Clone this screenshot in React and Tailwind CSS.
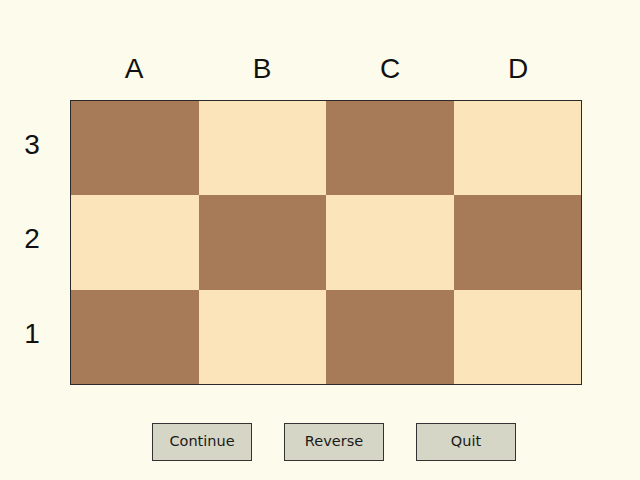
export default function App() {
  const cols = ["A", "B", "C", "D"];
  const rows = [3, 2, 1];
  const dark = "bg-[#a87b58]";
  const light = "bg-[#fce4ba]";
  return (
    <div className="w-[640px] h-[480px] bg-[#fdfcec] text-[#111] overflow-hidden" style={{ fontFamily: '"Liberation Sans", Arial, sans-serif' }}>
      <div className="flex pl-[70px] pt-[53px] h-[100px]">
        {cols.map((c) => (
          <div key={c} className="w-[128px] text-center text-[28px] leading-[32px]">{c}</div>
        ))}
      </div>
      <div className="flex">
        <div className="w-[70px] pr-[6px] flex flex-col -mt-[2px]">
          {rows.map((r) => (
            <div key={r} className="h-[94.3px] flex items-center justify-center text-[28px] leading-[32px]">{r}</div>
          ))}
        </div>
        <div className="w-[512px] h-[285px] border border-[#2a2a2a] grid grid-cols-4 grid-rows-3">
          {rows.map((r, ri) =>
            cols.map((c, ci) => (
              <div key={c + r} className={(ri + ci) % 2 === 0 ? dark : light}></div>
            ))
          )}
        </div>
      </div>
      <div className="flex gap-[32px] pl-[152px] pt-[38px]" style={{ fontFamily: '"DejaVu Sans", Verdana, sans-serif' }}>
        {["Continue", "Reverse", "Quit"].map((b) => (
          <div key={b} className="w-[100px] h-[38px] border border-[#333] bg-[#d6d6c6] flex items-center justify-center text-[14.5px] text-[#1a1a1a]">{b}</div>
        ))}
      </div>
    </div>
  );
}
